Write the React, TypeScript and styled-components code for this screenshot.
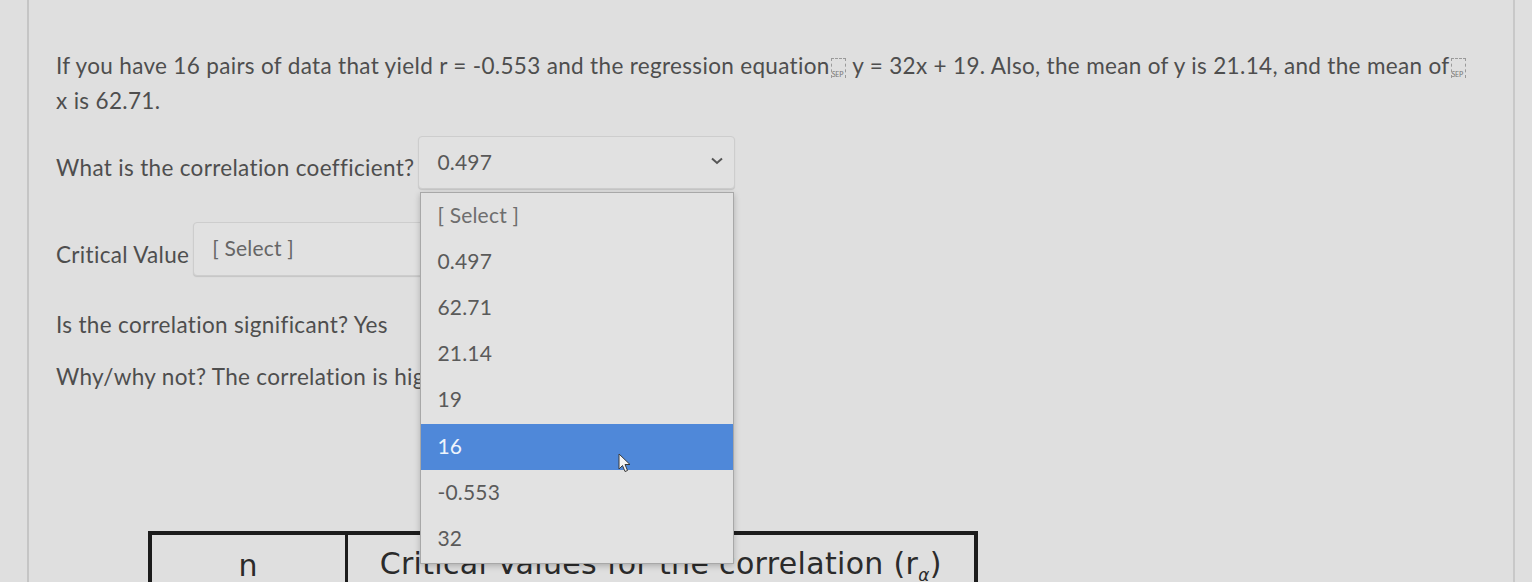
import styled, { createGlobalStyle } from "styled-components";

const GlobalStyle = createGlobalStyle`
  html, body {
    margin: 0;
    background: #dfdfdf;
    font-family: Lato, "Open Sans", sans-serif;
  }
  * {
    box-sizing: border-box;
  }
`;

const Panel = styled.div`
  margin-left: 27px;
  width: 1488px;
  height: 582px;
  overflow: hidden;
  border-left: 2px solid #c5c5c5;
  border-right: 2px solid #c8c8c8;
  padding: 48px 27px 0 27px;
  color: #4e4e4e;
  font-size: 22.5px;
  letter-spacing: 0.33px;
`;

const Para = styled.p<{ $top?: number }>`
  margin: ${({ $top }) => $top ?? 0}px 0 0 0;
  line-height: 35px;
  white-space: nowrap;
`;

const Sep = styled.span`
  display: inline-block;
  position: relative;
  width: 15px;
  height: 20px;
  margin: 0 1px;
  vertical-align: -4px;
  border: 1px dashed #9a9a9a;
  border-bottom: none;
  font-size: 7px;
  line-height: 1;
  letter-spacing: -0.2px;
  color: #777;

  &::after {
    content: "SEP";
    position: absolute;
    left: 0;
    bottom: 0;
  }
`;

const Row = styled.div<{ $top: number }>`
  display: flex;
  align-items: center;
  gap: 4px;
  margin-top: ${({ $top }) => $top}px;
`;

const Label = styled.span`
  padding-top: 10px;
  line-height: 35px;
`;

const SelectBox = styled.div<{ $height: number }>`
  position: relative;
  width: 317px;
  height: ${({ $height }) => $height}px;
  display: flex;
  align-items: center;
  justify-content: space-between;
  padding: 0 10px 3px 18px;
  background: #e1e1e1;
  border: 1px solid #cdcdcd;
  border-radius: 4px;
  box-shadow: 0 1px 1px rgba(0, 0, 0, 0.12);
  font-size: 21px;
  letter-spacing: 0.2px;
  color: #585858;
`;

const Placeholder = styled.span`
  color: #666;
`;

const Menu = styled.ul`
  position: absolute;
  top: calc(100% + 4px);
  left: 1px;
  right: 0;
  z-index: 10;
  margin: 0;
  padding: 0;
  list-style: none;
  background: #e2e2e2;
  border: 1px solid #a8a8a8;
  box-shadow: 0 2px 6px rgba(0, 0, 0, 0.22);
`;

const Item = styled.li<{ $active?: boolean; $muted?: boolean }>`
  position: relative;
  height: 46.2px;
  display: flex;
  align-items: center;
  padding: 0 0 4px 16px;
  background: ${({ $active }) => ($active ? "#4f88d9" : "transparent")};
  color: ${({ $active, $muted }) =>
    $active ? "#eef4fc" : $muted ? "#6e6e6e" : "#5a5a5a"};
`;

const Cursor = styled.svg`
  position: absolute;
  left: 197px;
  top: 29px;
`;

const Table = styled.table`
  margin: 137px 0 0 92px;
  width: 830px;
  border-collapse: collapse;
  border: 4px solid #1c1c1c;
  font-family: "DejaVu Sans", "Liberation Sans", sans-serif;
  font-size: 30px;
  color: #2b2b2b;
`;

const Th = styled.th<{ $w?: number }>`
  width: ${({ $w }) => ($w ? `${$w}px` : "auto")};
  height: 64px;
  padding: 0;
  font-weight: normal;
  text-align: center;
  border-right: 3px solid #1c1c1c;
  vertical-align: middle;
`;

const Sub = styled.sub`
  font-size: 17px;
  font-style: italic;
`;

const Chevron = () => (
  <svg width="14" height="10" viewBox="0 0 14 10">
    <path d="M2 2.5 L7 7 L12 2.5" fill="none" stroke="#555" strokeWidth="2" />
  </svg>
);

const options = ["0.497", "62.71", "21.14", "19", "16", "-0.553", "32"];

export default function App() {
  return (
    <>
      <GlobalStyle />
      <Panel>
        <Para>
          If you have 16 pairs of data that yield r = -0.553 and the regression
          equation<Sep /> y = 32x + 19. Also, the mean of y is 21.14, and the
          mean of<Sep />
          <br />x is 62.71.
        </Para>

        <Row $top={18}>
          <Label>What is the correlation coefficient?</Label>
          <SelectBox $height={53}>
            <span>0.497</span>
            <Chevron />
            <Menu>
              <Item $muted>[ Select ]</Item>
              {options.map((o) => (
                <Item key={o} $active={o === "16"}>
                  {o}
                  {o === "16" && (
                    <Cursor width="13" height="20" viewBox="0 0 13 20">
                      <path
                        d="M1 1 L1 16 L4.5 12.5 L7 18.5 L9.5 17.5 L7 11.5 L12 11.5 Z"
                        fill="#f4f4f4"
                        stroke="#3a3a3a"
                        strokeWidth="1"
                      />
                    </Cursor>
                  )}
                </Item>
              ))}
            </Menu>
          </SelectBox>
        </Row>

        <Row $top={33}>
          <Label>Critical Value</Label>
          <SelectBox $height={54}>
            <Placeholder>[ Select ]</Placeholder>
            <Chevron />
          </SelectBox>
        </Row>

        <Para $top={31}>Is the correlation significant? Yes</Para>
        <Para $top={17}>Why/why not? The correlation is high</Para>

        <Table>
          <thead>
            <tr>
              <Th $w={196}>n</Th>
              <Th>
                Critical Values for the correlation (r<Sub>α</Sub>)
              </Th>
            </tr>
          </thead>
        </Table>
      </Panel>
    </>
  );
}
